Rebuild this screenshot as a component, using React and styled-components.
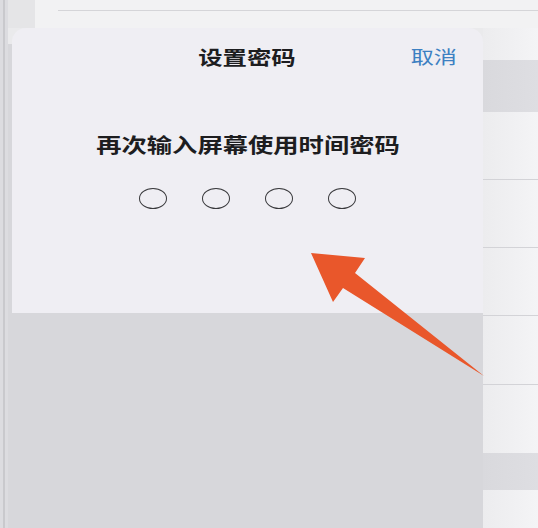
import styled, { createGlobalStyle } from "styled-components";

const GlobalStyle = createGlobalStyle`
  html, body {
    margin: 0;
    padding: 0;
    background: #f1f1f3;
  }

  body {
    font-family: "Noto Sans CJK SC", "Noto Sans", sans-serif;
  }
`;

const StyledScreen = styled.div`
  width: 538px;
  height: 528px;
  display: flex;
  overflow: hidden;
  position: relative;
  background-color: #f1f1f3;
`;

const Rail = styled.div`
  width: 8px;
  flex-shrink: 0;
  background: linear-gradient(
    to right,
    #dcdce0 0 3px,
    #c9c9cd 3px 5px,
    #dcdce0 5px
  );
`;

const Stage = styled.div`
  flex: 1;
  display: flex;
  flex-direction: column;
`;

const TopBar = styled.div`
  height: 28px;
  display: flex;
  flex-shrink: 0;

  .top-bar__corner {
    width: 27px;
    background-color: #e5e5e7;
  }

  .top-bar__rest {
    flex: 1;
    background-color: #f2f2f3;
  }

  .top-bar__line {
    height: 10px;
    margin-left: 23px;
    border-bottom: 1px solid #d5d5d8;
  }
`;

const Body = styled.div`
  flex: 1;
  display: flex;
`;

const SheetColumn = styled.div`
  width: 475px;
  display: flex;
  flex-shrink: 0;
  padding-left: 4px;
  box-sizing: border-box;
  flex-direction: column;
  background: linear-gradient(
    to bottom,
    #eaeaec 0 16px,
    #d7d7db 16px
  );
`;

const Sheet = styled.section`
  height: 285px;
  display: flex;
  align-items: center;
  flex-direction: column;
  border-radius: 14px 14px 0 0;
  background-color: #efeef3;
`;

/* the capture is stretched sideways, so the glyphs are widened with scaleX */
const SheetHeader = styled.header`
  width: 100%;
  height: 56px;
  display: flex;
  position: relative;
  align-items: center;
  justify-content: center;

  .sheet__title {
    margin: 0;
    font-size: 19.5px;
    font-weight: 600;
    color: #1d1d1f;
    transform: scaleX(1.25);
  }

  .sheet__cancel {
    top: 0;
    right: 26px;
    height: 56px;
    padding: 0;
    border: none;
    display: flex;
    position: absolute;
    align-items: center;
    font-size: 18.5px;
    font-family: inherit;
    color: #3c80c2;
    background: transparent;
    transform: scaleX(1.25);
    transform-origin: right center;
  }
`;

const Prompt = styled.p`
  margin: 47px 0 0;
  font-size: 20px;
  font-weight: 600;
  line-height: 28px;
  color: #1d1d1f;
  transform: scaleX(1.265);
`;

const DotRow = styled.div`
  display: flex;
  gap: 35px;
  margin-top: 29px;
`;

const Dot = styled.span`
  width: 28px;
  height: 21px;
  border-radius: 50%;
  box-sizing: border-box;
  border: 1.7px solid #39393c;
  background-color: ${({ filled }) => (filled ? "#39393c" : "transparent")};
`;

const Dim = styled.div`
  flex: 1;
`;

const SidePanel = styled.aside`
  flex: 1;
  display: flex;
  flex-direction: column;
  background-color: #f3f3f5;
`;

const SideRow = styled.div`
  height: ${({ h }) => h}px;
  flex-shrink: 0;
  box-sizing: border-box;
  background: ${({ band }) =>
    band
      ? "linear-gradient(to right, #d9d9dd, #dedee2)"
      : "linear-gradient(to right, #ececee, #f4f4f6)"};
  border-bottom: ${({ line }) => (line ? "1px solid #d3d3d7" : "none")};
`;

const ArrowLayer = styled.svg`
  top: 0;
  left: 0;
  width: 538px;
  height: 528px;
  position: absolute;
  pointer-events: none;
`;

const sideRows = [
  { h: 32, band: false, line: false },
  { h: 52, band: true, line: false },
  { h: 68, band: false, line: true },
  { h: 68, band: false, line: true },
  { h: 68, band: false, line: true },
  { h: 69, band: false, line: true },
  { h: 68, band: false, line: false },
  { h: 37, band: true, line: false },
  { h: 40, band: false, line: false }
];

const App = () => {
  const digits = [false, false, false, false];

  return (
    <>
      <GlobalStyle />
      <StyledScreen>
        <Rail />
        <Stage>
          <TopBar>
            <div className="top-bar__corner" />
            <div className="top-bar__rest">
              <div className="top-bar__line" />
            </div>
          </TopBar>
          <Body>
            <SheetColumn>
              <Sheet>
                <SheetHeader>
                  <h2 className="sheet__title">设置密码</h2>
                  <button className="sheet__cancel" type="button">
                    取消
                  </button>
                </SheetHeader>
                <Prompt>再次输入屏幕使用时间密码</Prompt>
                <DotRow>
                  {digits.map((filled, i) => (
                    <Dot key={i} filled={filled} />
                  ))}
                </DotRow>
              </Sheet>
              <Dim />
            </SheetColumn>
            <SidePanel>
              {sideRows.map((row, i) => (
                <SideRow key={i} h={row.h} band={row.band} line={row.line} />
              ))}
            </SidePanel>
          </Body>
        </Stage>
        <ArrowLayer viewBox="0 0 538 528">
          <polygon
            fill="#e9572b"
            points="311,253 365,258 355,273 484,376 343,288 333,302"
          />
        </ArrowLayer>
      </StyledScreen>
    </>
  );
};

export default App;
